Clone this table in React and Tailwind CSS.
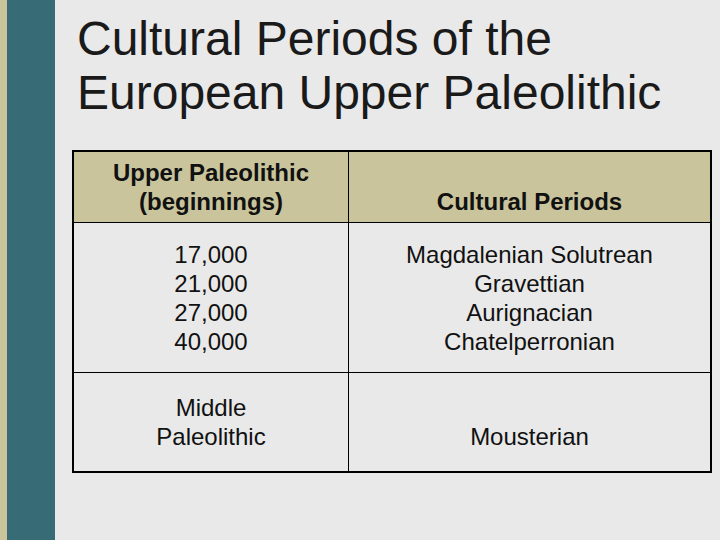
import React from "react";

const rows = [
  {
    head: true,
    left: ["Upper Paleolithic", "(beginnings)"],
    right: ["", "Cultural Periods"],
    h: "h-[70px]",
  },
  {
    left: ["17,000", "21,000", "27,000", "40,000"],
    right: ["Magdalenian Solutrean", "Gravettian", "Aurignacian", "Chatelperronian"],
    h: "h-[150px]",
  },
  {
    left: ["Middle", "Paleolithic"],
    right: ["", "Mousterian"],
    h: "h-[99px]",
  },
];

function Cell({ lines, className }) {
  return (
    <div className={"flex flex-col items-center justify-center text-center " + className}>
      {lines.map((l, i) => (
        <div key={i} className="h-[29px] leading-[29px] whitespace-nowrap">
          {l}
        </div>
      ))}
    </div>
  );
}

export default function App() {
  return (
    <div
      className="w-[720px] h-[540px] flex bg-[#e9e9e9] text-[#111] overflow-hidden"
      style={{ fontFamily: '"Liberation Sans", Arial, sans-serif' }}
    >
      <div className="w-[7px] bg-[#c9c49a]" />
      <div className="w-[48px] bg-[#376b75]" />
      <div className="flex-1 flex flex-col">
        <h1 className="pl-[22px] pt-[12px] text-[48px] leading-[54px] text-[#1a1a1a] font-normal">
          Cultural Periods of the
          <br />
          European Upper Paleolithic
        </h1>
        <div className="mt-[30px] ml-[17px] w-[640px] border-2 border-black">
          {rows.map((r, i) => (
            <div
              key={i}
              className={
                "flex " +
                r.h +
                (i > 0 ? " border-t border-black" : "") +
                (r.head ? " bg-[#c9c49b] font-bold" : "")
              }
            >
              <Cell lines={r.left} className="w-[275px] border-r border-black text-[24px]" />
              <Cell lines={r.right} className="flex-1 text-[24px]" />
            </div>
          ))}
        </div>
      </div>
    </div>
  );
}
